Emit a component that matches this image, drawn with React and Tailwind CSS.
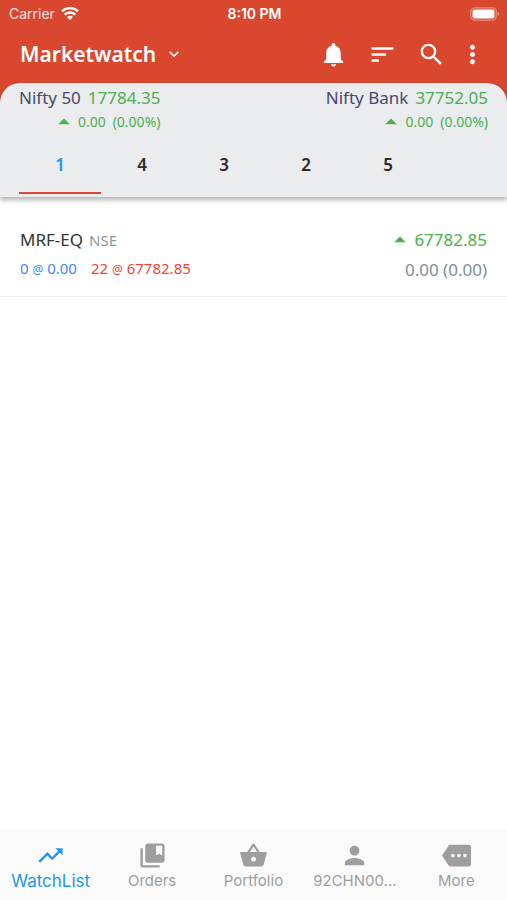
import { useState } from "react";
import {
  MdNotifications,
  MdSort,
  MdSearch,
  MdMoreVert,
  MdKeyboardArrowDown,
  MdArrowDropUp,
  MdTrendingUp,
  MdCollectionsBookmark,
  MdShoppingBasket,
  MdPerson,
  MdMore,
} from "react-icons/md";

function WifiIcon() {
  return (
    <svg viewBox="0 0 18 14" className="h-[14px] w-[18px]" fill="none" stroke="currentColor" strokeWidth="2.5" aria-hidden="true">
      <path d="M1 4.4a11.3 11.3 0 0 1 16 0" />
      <path d="M3.7 7.7a7.5 7.5 0 0 1 10.6 0" />
      <path d="M6 10.1a4.2 4.2 0 0 1 6 0L9 13.1z" fill="currentColor" stroke="none" />
    </svg>
  );
}

function BatteryIcon() {
  return (
    <svg viewBox="0 0 30 14" className="h-[14px] w-[30px]" aria-hidden="true">
      <rect x="0.8" y="0.8" width="25.4" height="12.4" rx="3.6" fill="none" stroke="#fff" strokeOpacity="0.4" strokeWidth="1.2" />
      <rect x="2.5" y="2.5" width="22" height="9" rx="2" fill="#fff" />
      <path d="M27.6 4.8a2.6 2.6 0 0 1 0 4.4z" fill="#fff" fillOpacity="0.5" />
    </svg>
  );
}

function StatusBar() {
  return (
    <div className="grid h-[27px] grid-cols-3 items-center pr-[7px] pl-[9px] font-['Inter',sans-serif] text-sm text-white">
      <div className="flex items-center gap-1.5">
        <span className="text-white/85">Carrier</span>
        <WifiIcon />
      </div>
      <span className="text-center font-semibold">8:10 PM</span>
      <div className="flex justify-end">
        <BatteryIcon />
      </div>
    </div>
  );
}

function Header() {
  return (
    <header className="flex h-14 items-start justify-between pt-[13px] pr-7 pl-5 text-white">
      <button type="button" className="flex items-center gap-2">
        <span className="text-[21px] leading-7 font-semibold">Marketwatch</span>
        <MdKeyboardArrowDown className="size-5" />
      </button>
      <div className="flex items-center gap-5">
        <button type="button" aria-label="Notifications"><MdNotifications className="size-[29px]" /></button>
        <button type="button" aria-label="Sort"><MdSort className="size-[29px]" /></button>
        <button type="button" aria-label="Search"><MdSearch className="size-[29px]" /></button>
        <button type="button" aria-label="More options" className="-mx-2"><MdMoreVert className="size-[29px]" /></button>
      </div>
    </header>
  );
}

function IndexQuote({ name, value }) {
  return (
    <div className="flex flex-col items-end">
      <div className="flex gap-[7px] text-[17px] leading-6">
        <span className="text-[#48486e]">{name}</span>
        <span className="text-[#4caf50]">{value}</span>
      </div>
      <div className="flex h-6 items-center text-sm leading-6 text-[#4caf50]">
        <MdArrowDropUp className="size-7" />
        <span className="mr-[7px]">0.00</span>
        <span>(0.00%)</span>
      </div>
    </div>
  );
}

const lists = ["1", "4", "3", "2", "5"];

function Tabs() {
  const [active, setActive] = useState("1");
  return (
    <div role="tablist" className="flex h-[60px] px-[19px]">
      {lists.map((name) => (
        <button
          key={name}
          type="button"
          role="tab"
          aria-selected={name === active}
          onClick={() => setActive(name)}
          className={
            "w-[82px] border-b-2 pt-1 text-[17px] font-semibold " +
            (name === active ? "border-[#d9483b] text-[#2196f3]" : "border-transparent text-[#2b2b2b]")
          }
        >
          {name}
        </button>
      ))}
    </div>
  );
}

function StockRow() {
  return (
    <li className="flex justify-between border-b border-[#f0f0f0] px-5 pt-[29px] pb-3">
      <div>
        <div className="flex items-center gap-1.5 leading-7">
          <span className="text-[17px] text-[#333333]">MRF-EQ</span>
          <span className="text-[15px] text-[#8b999f]">NSE</span>
        </div>
        <div className="flex gap-3.5 text-[15px] leading-7">
          <span className="text-[#4285f4]">0 <span className="text-xs">@</span> 0.00</span>
          <span className="text-[#f44336]">22 <span className="text-xs">@</span> 67782.85</span>
        </div>
      </div>
      <div className="flex flex-col items-end">
        <div className="flex items-center text-[17px] leading-7 text-[#4caf50]">
          <MdArrowDropUp className="size-7" />
          <span>67782.85</span>
        </div>
        <span className="pt-0.5 text-[17px] leading-7 text-[#78909c]">0.00 (0.00)</span>
      </div>
    </li>
  );
}

const destinations = [
  { label: "WatchList", Icon: MdTrendingUp },
  { label: "Orders", Icon: MdCollectionsBookmark },
  { label: "Portfolio", Icon: MdShoppingBasket },
  { label: "92CHN00...", Icon: MdPerson },
  { label: "More", Icon: MdMore },
];

function BottomNav() {
  const [current, setCurrent] = useState("WatchList");
  return (
    <nav className="grid h-[70px] grid-cols-5 bg-[#fafafa] font-['Inter',sans-serif]">
      {destinations.map(({ label, Icon }) => (
        <button
          key={label}
          type="button"
          aria-current={label === current ? "page" : undefined}
          onClick={() => setCurrent(label)}
          className={
            "flex flex-col items-center pt-[11px] " +
            (label === current ? "text-[17px] text-[#2196f3]" : "text-[15px] text-[#9e9e9e]")
          }
        >
          <Icon className="size-[29px]" />
          <span className="leading-[22px]">{label}</span>
        </button>
      ))}
    </nav>
  );
}

export default function App() {
  return (
    <div className="flex min-h-screen flex-col bg-white font-['Noto_Sans',sans-serif]">
      <div className="bg-[#d9472f]">
        <StatusBar />
        <Header />
        <section className="rounded-t-[20px] bg-[#ebeced] pt-[3px] shadow-[0_3px_5px_rgba(0,0,0,0.3)]">
          <div className="flex justify-between px-[19px]">
            <IndexQuote name="Nifty 50" value="17784.35" />
            <IndexQuote name="Nifty Bank" value="37752.05" />
          </div>
          <Tabs />
          <div className="h-[3px]" />
        </section>
      </div>
      <main className="flex-1">
        <ul>
          <StockRow />
        </ul>
      </main>
      <BottomNav />
    </div>
  );
}
